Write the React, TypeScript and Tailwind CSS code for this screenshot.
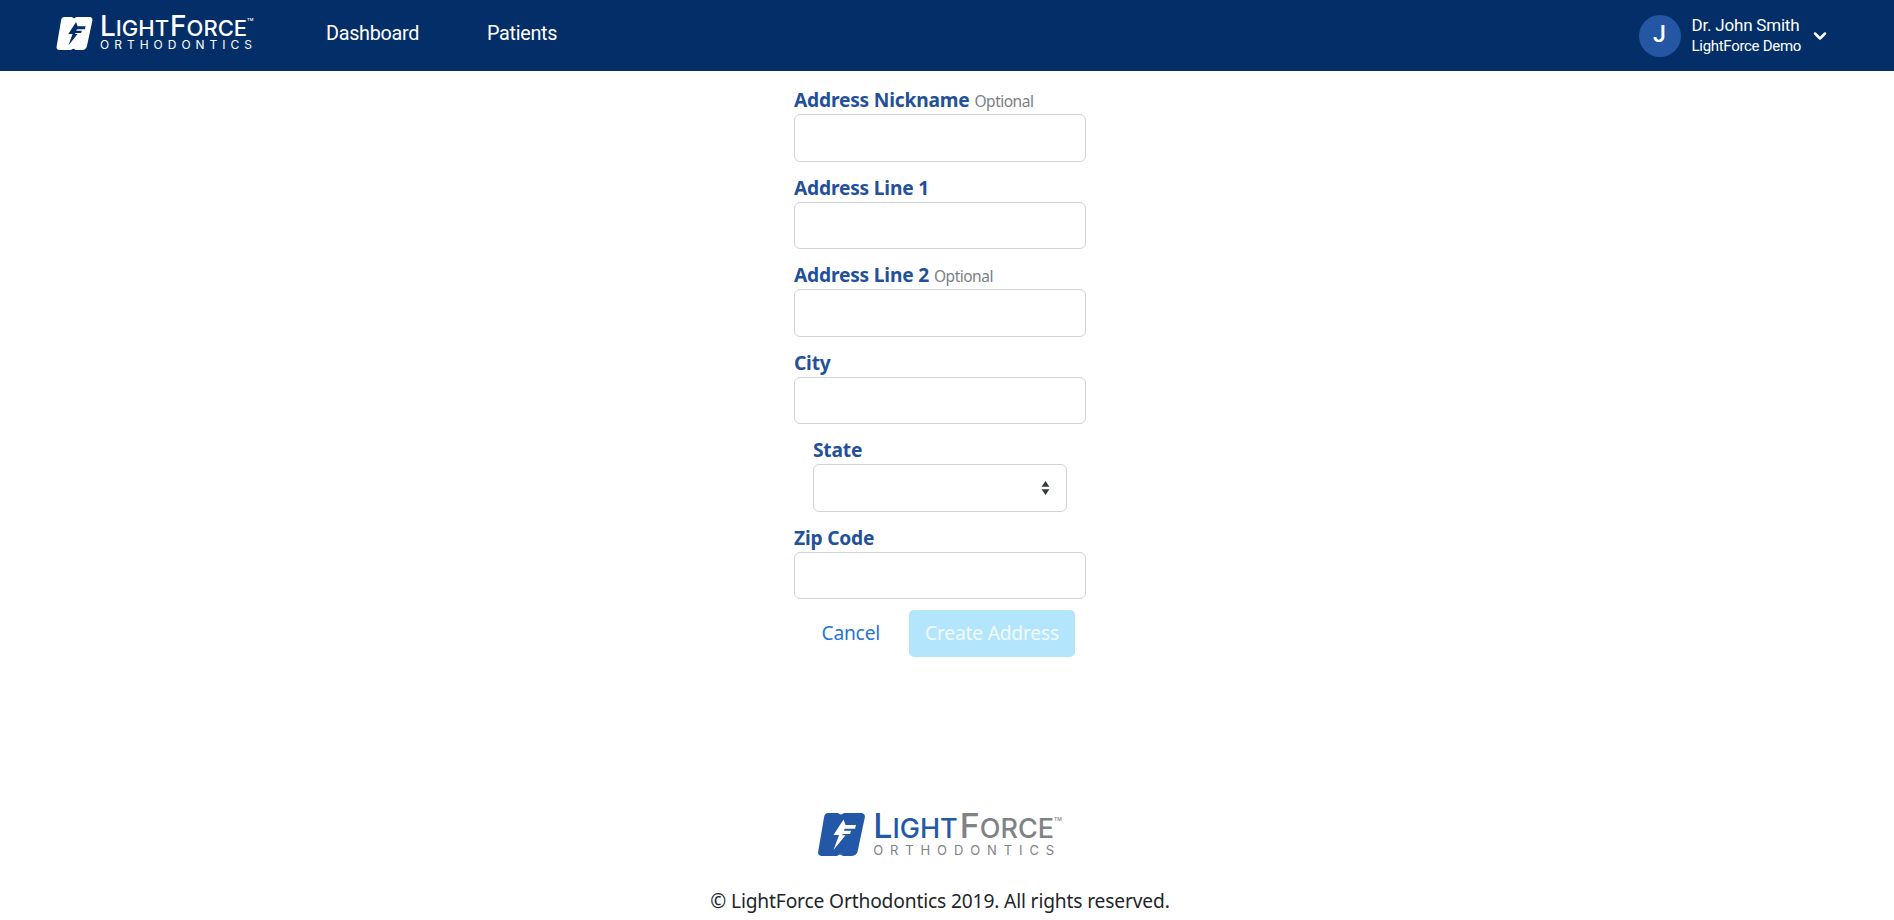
import { ChevronDown } from 'lucide-react';

const fieldFont = "font-['Noto_Sans',sans-serif]";

function LogoMark({ className, body, bolt }: { className: string; body: string; bolt: string }) {
  return (
    <svg viewBox="0 0 47 43" className={className}>
      <path
        fill={body}
        d="M10 0H19.5C21 0 21.5 1.6 23 1.6C24.5 1.6 25 0 26.5 0H43C45.8 0 47.4 2 46.8 4.6L39.6 38.6C39 41.2 36.6 43 34 43H25.5C24 43 23.5 41.4 22 41.4C20.5 41.4 20 43 18.5 43H4C1.2 43 -0.4 41 0.2 38.4L6 4.4C6.4 1.8 7.6 0 10 0Z"
      />
      <path
        fill={bolt}
        d="M25.5 6.5L15.5 22H21L15.5 37L27.5 22.2H24L25 21H32L33 17.8H25.9L26.7 15.8H37L38 12H27.5L25.5 6.5Z"
      />
    </svg>
  );
}

function Logo({ footer }: { footer?: boolean }) {
  if (footer) {
    return (
      <div className="flex items-start gap-[8px] h-[46px] font-['Inter',sans-serif]">
        <LogoMark className="w-[47px] h-[43px]" body="#2358a8" bolt="#ffffff" />
        <div className="flex flex-col">
          <div className="flex items-baseline h-[26px] leading-[26px] font-medium">
            <span className="text-[#2358a8] text-[34px]">L</span>
            <span className="text-[#2358a8] text-[27px]">IGHT</span>
            <span className="text-[#808285] text-[34px] ml-[2px]">F</span>
            <span className="text-[#808285] text-[27px]">ORCE</span>
            <span className="text-[#808285] text-[5px] self-start leading-[12px]">TM</span>
          </div>
          <div className="text-[#808285] text-[13px] leading-[13px] mt-[5px] tracking-[6.9px]">ORTHODONTICS</div>
        </div>
      </div>
    );
  }
  return (
    <div className="flex items-center gap-[7px] -mt-[4px] font-['Inter',sans-serif] text-white">
      <LogoMark className="w-[37px] h-[33px]" body="#ffffff" bolt="#032e68" />
      <div className="flex flex-col">
        <div className="flex items-baseline h-[20px] leading-[20px] font-medium">
          <span className="text-[28px]">L</span>
          <span className="text-[22px]">IGHT</span>
          <span className="text-[28px] ml-[1px]">F</span>
          <span className="text-[22px]">ORCE</span>
          <span className="text-[4px] self-start leading-[8px]">TM</span>
        </div>
        <div className="text-[12px] leading-[12px] mt-[3px] tracking-[5px]">ORTHODONTICS</div>
      </div>
    </div>
  );
}

function Field({ label, optional }: { label: string; optional?: boolean }) {
  return (
    <div className="mb-[13px]">
      <label className="flex items-baseline gap-[5px] h-[27px] leading-[26px]">
        <span className="text-[#22509a] text-[19.2px] font-bold tracking-[-0.2px]">{label}</span>
        {optional && <span className="text-[#7b7f85] text-[15.5px] tracking-[-0.5px]">Optional</span>}
      </label>
      <input className="block w-full h-[47.5px] rounded-[6px] border border-[#ced4da] bg-white" />
    </div>
  );
}

export default function App() {
  return (
    <div className={`min-h-[920px] flex flex-col bg-white ${fieldFont}`}>
      <header className="h-[71px] bg-[#032e68] flex items-center pl-[56px] pr-[64px] font-['Roboto',sans-serif] text-white">
        <Logo />
        <nav className="flex items-center gap-[68px] ml-[69px] text-[19.8px] tracking-[-0.3px] -mt-[4px]">
          <a>Dashboard</a>
          <a>Patients</a>
        </nav>
        <div className="ml-auto flex items-center">
          <div className="w-[42px] h-[42px] rounded-full bg-[#2456a4] flex items-center justify-center text-[23px] font-medium">J</div>
          <div className="ml-[11px] flex flex-col">
            <span className="text-[17px] leading-[21px] tracking-[-0.2px]">Dr. John Smith</span>
            <span className="text-[15px] leading-[20px] tracking-[-0.3px]">LightForce Demo</span>
          </div>
          <ChevronDown className="w-[20px] h-[20px] ml-[9px]" strokeWidth={3} />
        </div>
      </header>

      <main className="flex justify-center pr-[14px] pt-[16px]">
        <form className="w-[292px]">
          <Field label="Address Nickname" optional />
          <Field label="Address Line 1" />
          <Field label="Address Line 2" optional />
          <Field label="City" />
          <div className="mb-[13px] px-[19px]">
            <label className="block h-[27px] leading-[26px] text-[#22509a] text-[19.2px] font-bold tracking-[-0.2px]">State</label>
            <div className="relative">
              <select className="block w-full h-[47.5px] rounded-[6px] border border-[#ced4da] bg-white appearance-none" />
              <svg viewBox="0 0 10 16" className="absolute right-[16px] top-[17px] w-[11px] h-[14px]">
                <path fill="#343a40" d="M5 0L9.5 6.5H0.5Z M5 16L0.5 9.5H9.5Z" />
              </svg>
            </div>
          </div>
          <Field label="Zip Code" />
          <div className="flex items-center justify-end pr-[11px] -mt-[2px]">
            <button type="button" className="text-[#2673dd] text-[19.2px] tracking-[-0.2px] mr-[29px]">Cancel</button>
            <button type="button" className="w-[166px] h-[47px] rounded-[5px] bg-[#b3e5fc] text-white/80 text-[19.2px] tracking-[-0.2px]">Create Address</button>
          </div>
        </form>
      </main>

      <footer className="mt-auto pr-[14px] pb-[5px] flex flex-col items-center">
        <Logo footer />
        <p className="mt-[27px] text-[#212529] text-[19.2px] leading-[29px] tracking-[-0.15px]">© LightForce Orthodontics 2019. All rights reserved.</p>
      </footer>
    </div>
  );
}
